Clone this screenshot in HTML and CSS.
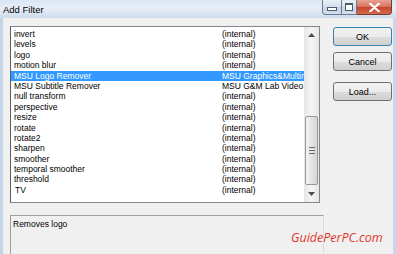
FILE: index.html
```
<!DOCTYPE html>
<html lang="en">
<head>
    <meta charset="UTF-8">
    <title>Add Filter</title>
    <link rel="stylesheet" href="styles.css">
</head>
<body>
    <div class="window">
        <div class="titlebar">
            <span class="title">Add Filter</span>
            <div class="caption-buttons">
                <span class="cap-btn cap-min"><span class="min-glyph"></span></span>
                <span class="cap-btn cap-max"><span class="max-glyph"></span></span>
                <span class="cap-btn cap-close">
                    <svg width="11" height="9" viewBox="0 0 11 9"><path d="M1 0.5 L10 8.5 M10 0.5 L1 8.5" stroke="#fff" stroke-width="2.2" stroke-linecap="round"/></svg>
                </span>
            </div>
        </div>

        <div class="client">
            <div class="left-col">
                <div class="listbox">
                    <div class="rows">
                        <div class="row"><span>invert</span><span>(internal)</span></div>
                        <div class="row"><span>levels</span><span>(internal)</span></div>
                        <div class="row"><span>logo</span><span>(internal)</span></div>
                        <div class="row"><span>motion blur</span><span>(internal)</span></div>
                        <div class="row selected"><span>MSU Logo Remover</span><span>MSU Graphics&amp;Multim</span></div>
                        <div class="row"><span>MSU Subtitle Remover</span><span>MSU G&amp;M Lab Video</span></div>
                        <div class="row"><span>null transform</span><span>(internal)</span></div>
                        <div class="row"><span>perspective</span><span>(internal)</span></div>
                        <div class="row"><span>resize</span><span>(internal)</span></div>
                        <div class="row"><span>rotate</span><span>(internal)</span></div>
                        <div class="row"><span>rotate2</span><span>(internal)</span></div>
                        <div class="row"><span>sharpen</span><span>(internal)</span></div>
                        <div class="row"><span>smoother</span><span>(internal)</span></div>
                        <div class="row"><span>temporal smoother</span><span>(internal)</span></div>
                        <div class="row"><span>threshold</span><span>(internal)</span></div>
                        <div class="row"><span class="indent">TV</span><span>(internal)</span></div>
                    </div>
                    <div class="scrollbar">
                        <div class="arrow"><svg width="7" height="4" viewBox="0 0 7 4"><path d="M0 4 L3.5 0 L7 4 Z" fill="#4d4d4d"/></svg></div>
                        <div class="track">
                            <div class="thumb"><span class="grip"></span></div>
                        </div>
                        <div class="arrow"><svg width="7" height="4" viewBox="0 0 7 4"><path d="M0 0 L7 0 L3.5 4 Z" fill="#4d4d4d"/></svg></div>
                    </div>
                </div>
                <div class="description">Removes logo</div>
            </div>

            <div class="right-col">
                <button class="btn default">OK</button>
                <button class="btn">Cancel</button>
                <button class="btn load">Load...</button>
            </div>
        </div>

        <div class="watermark">GuidePerPC.com</div>
    </div>
</body>
</html>
```

FILE: styles.css
```
body {
    margin: 0;
    width: 396px;
    height: 254px;
    overflow: hidden;
    font-family: "Liberation Sans", Arial, sans-serif;
    background-color: #f0f0f0;
}
.window {
    position: relative;
    width: 396px;
    height: 254px;
    display: flex;
    flex-direction: column;
    background: linear-gradient(90deg, #c3d5e8, #d6e3f0 40%, #c8d8ea);
    box-sizing: border-box;
    padding: 0 3px 0 3px;
}
.titlebar {
    height: 18px;
    display: flex;
    justify-content: space-between;
    align-items: flex-start;
    margin: 0 -3px;
    padding-left: 3px;
    background: linear-gradient(180deg, #d9e6f3 0%, #e6eef7 45%, #cddcec 100%);
}
.title {
    font-size: 9.5px;
    color: #000;
    margin-top: 4px;
}
.caption-buttons {
    display: flex;
    margin-right: 4px;
}
.cap-btn {
    height: 15px;
    display: flex;
    justify-content: center;
    align-items: center;
    border: 1px solid #6d7a8d;
    border-top: none;
    box-sizing: border-box;
    background: linear-gradient(180deg, #e9eff6, #d6e0ec 50%, #c4d2e2 51%, #d4e0ee);
}
.cap-min {
    width: 20px;
    border-radius: 0 0 0 4px;
}
.cap-max {
    width: 15px;
    border-left: none;
}
.cap-close {
    width: 35px;
    border-left: none;
    border-color: #7a3a30;
    border-radius: 0 0 4px 0;
    background: linear-gradient(180deg, #e8a394, #d7705c 50%, #c6432c 51%, #d46a4c);
}
.min-glyph {
    width: 8px;
    height: 2px;
    margin-top: 4px;
    background-color: #fff;
    border: 1px solid #4c5a6c;
}
.max-glyph {
    width: 6px;
    height: 5px;
    border: 1px solid #4c5a6c;
    border-top-width: 2px;
    background-color: #fff;
}
.client {
    flex: 1;
    display: flex;
    background-color: #f0f0f0;
    padding: 8px 1px 0 7px;
    gap: 13px;
    min-height: 0;
}
.left-col {
    width: 310px;
    display: flex;
    flex-direction: column;
    gap: 12px;
}
.listbox {
    height: 177px;
    display: flex;
    background-color: #fff;
    border: 1px solid #828790;
    border-left-color: #5a5e66;
    box-sizing: border-box;
    font-size: 8.5px;
    color: #000;
}
.rows {
    flex: 1;
    padding-top: 2px;
    overflow: hidden;
}
.row {
    display: grid;
    grid-template-columns: 208px 1fr;
    height: 10.4px;
    line-height: 10.4px;
    padding-left: 3px;
    white-space: nowrap;
    overflow: hidden;
}
.row span {
    overflow: hidden;
}
.row.selected {
    background-color: #3399ff;
    color: #fff;
}
.indent {
    padding-left: 1px;
}
.scrollbar {
    width: 15px;
    display: flex;
    flex-direction: column;
    background: linear-gradient(90deg, #e6e6e6, #f5f5f5 50%, #e6e6e6);
}
.arrow {
    height: 16px;
    display: flex;
    justify-content: center;
    align-items: center;
}
.track {
    flex: 1;
    display: flex;
    flex-direction: column;
    justify-content: flex-end;
    padding-bottom: 1px;
}
.thumb {
    height: 67px;
    margin: 0 1px;
    border: 1px solid #979797;
    border-radius: 2px;
    background: linear-gradient(90deg, #f3f3f3, #e4e4e4 50%, #d6d6d6);
    display: flex;
    justify-content: center;
    align-items: center;
}
.grip {
    width: 6px;
    height: 5px;
    border-top: 1px solid #6e6e6e;
    border-bottom: 1px solid #6e6e6e;
    background: linear-gradient(180deg, transparent 40%, #6e6e6e 40%, #6e6e6e 60%, transparent 60%);
}
.description {
    flex: 1;
    width: 308px;
    border-top: 1px solid #a0a0a0;
    border-left: 1px solid #a0a0a0;
    border-right: 1px solid #dcdcdc;
    background-color: #f0f0f0;
    font-size: 8.5px;
    color: #000;
    padding: 3px 2px;
}
.right-col {
    display: flex;
    flex-direction: column;
    padding-top: 1px;
}
.btn {
    width: 59px;
    height: 19px;
    margin-bottom: 6px;
    border: 1px solid #707070;
    border-radius: 3px;
    background: linear-gradient(180deg, #f2f2f2, #ebebeb 50%, #dddddd 51%, #cfcfcf);
    font-family: "Liberation Sans", Arial, sans-serif;
    font-size: 9px;
    color: #000;
    padding: 0;
}
.btn.default {
    border-color: #3c7fb1;
}
.btn.load {
    margin-top: 5px;
}
.watermark {
    position: absolute;
    left: 291px;
    top: 229px;
    font-family: "Open Sans", sans-serif;
    font-style: italic;
    font-size: 12.5px;
    color: #e2372d;
}
```
